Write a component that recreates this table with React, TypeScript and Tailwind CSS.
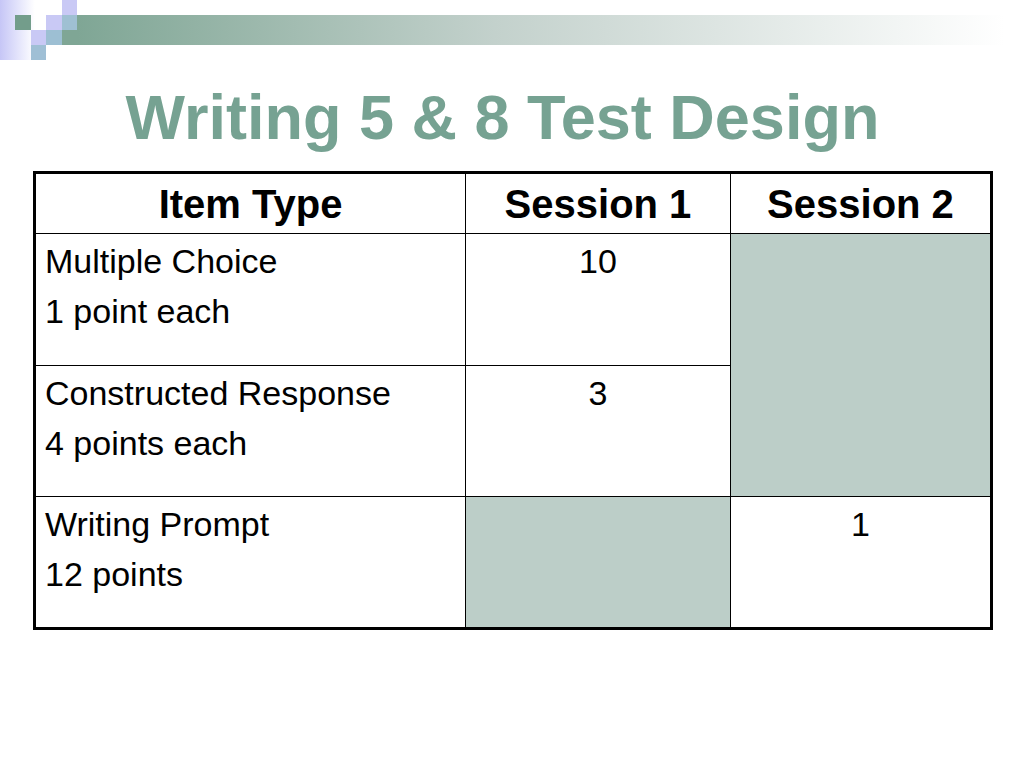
import React from "react";

const font = { fontFamily: '"Liberation Sans", Arial, sans-serif' };

export default function App() {
  return (
    <div className="w-[1024px] h-[768px] bg-white overflow-hidden" style={font}>
      {/* banner: squares + fading bar */}
      <div className="flex h-[60px]">
        <div className="grid grid-cols-[15px_16px_15px_16px_15px] grid-rows-[15px_15px_15px_15px] h-[60px] bg-gradient-to-r from-[#c6c6f6] via-white via-[45%] to-white">
          <div className="col-start-5 row-start-1 bg-[#c9c9f5]" />
          <div className="col-start-2 row-start-2 bg-[#739d8b]" />
          <div className="col-start-4 row-start-2 bg-[#c9c9f5]" />
          <div className="col-start-5 row-start-2 bg-[#9fc0d3]" />
          <div className="col-start-3 row-start-3 bg-[#c9c9f5]" />
          <div className="col-start-4 row-start-3 bg-[#9dbfd3]" />
          <div className="col-start-5 row-start-3 bg-[#7fa695]" />
          <div className="col-start-3 row-start-4 bg-[#9fbfd5]" />
        </div>
        <div className="flex-1 mt-[15px] h-[30px] mr-[20px] bg-gradient-to-r from-[#7fa695] via-[#c3d1cc] via-[45%] to-white" />
      </div>

      {/* title */}
      <h1 className="mt-[26px] pr-[19px] text-center text-[63px] leading-none font-bold text-[#76a292]">
        Writing 5 &amp; 8 Test Design
      </h1>

      {/* table */}
      <div className="ml-[33px] mt-[22px] w-[960px] border-[3px] border-black bg-black grid grid-cols-[429px_264px_259px] grid-rows-[59px_131px_130px_130px] gap-px text-black">
        <div className="bg-white flex items-center justify-center text-[40px] font-bold">Item Type</div>
        <div className="bg-white flex items-center justify-center text-[40px] font-bold">Session 1</div>
        <div className="bg-white flex items-center justify-center text-[40px] font-bold">Session 2</div>

        <div className="bg-white pl-[9px] pt-[2px] text-[34px] leading-[50px]">
          <div>Multiple Choice</div>
          <div>1 point each</div>
        </div>
        <div className="bg-white pt-[2px] text-center text-[34px] leading-[50px]">10</div>
        <div className="bg-[#bccec8] row-span-2" />

        <div className="bg-white pl-[9px] pt-[2px] text-[34px] leading-[50px]">
          <div>Constructed Response</div>
          <div>4 points each</div>
        </div>
        <div className="bg-white pt-[2px] text-center text-[34px] leading-[50px]">3</div>

        <div className="bg-white pl-[9px] pt-[2px] text-[34px] leading-[50px]">
          <div>Writing Prompt</div>
          <div>12 points</div>
        </div>
        <div className="bg-[#bccec8]" />
        <div className="bg-white pt-[2px] text-center text-[34px] leading-[50px]">1</div>
      </div>
    </div>
  );
}
